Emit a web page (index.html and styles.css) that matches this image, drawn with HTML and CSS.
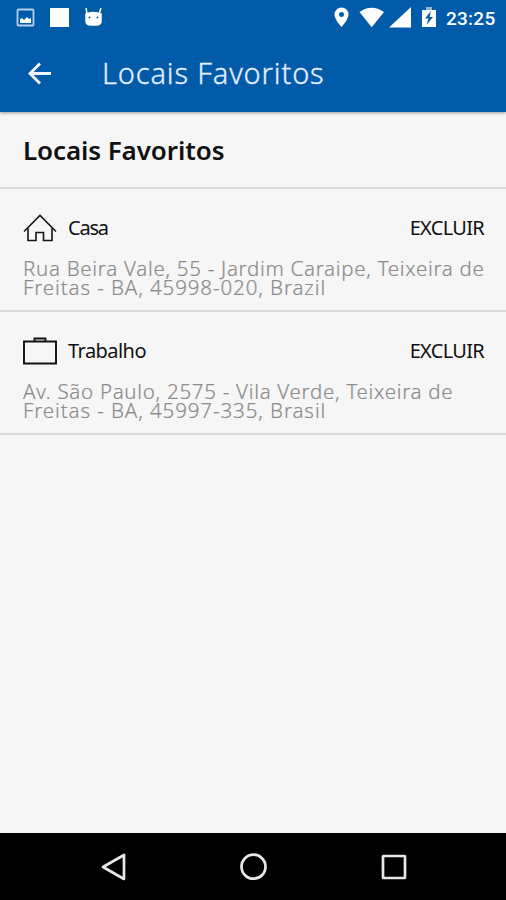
FILE: index.html
```html
<!DOCTYPE html>
<html lang="pt-BR">
<head>
<meta charset="utf-8">
<title>Locais Favoritos</title>
<link rel="stylesheet" href="styles.css">
</head>
<body>
<div class="screen">
  <header class="top">
    <div class="status">
      <svg class="status-left" width="120" height="36" viewBox="0 0 120 36">
        <rect x="17.5" y="9.5" width="16" height="16" rx="1" fill="none" stroke="#b5cfef" stroke-width="1.8"/>
        <path d="M20 23V19l2-1 2 2 3-3 2 2 2-1v5z" fill="#fff"/>
        <path d="M50 8h19v19H50z" fill="#fff"/>
        <path d="M86 14Q93 11 101 14V21Q101 25 96 25H91Q86 25 86 21zM87 14l-1-6M99 14l2-6" fill="#fff" stroke="#fff" stroke-width="1.5"/>
        <circle cx="89.5" cy="17.5" r="1" fill="#025ba9"/><circle cx="97.5" cy="17.5" r="1" fill="#025ba9"/>
      </svg>
      <svg class="status-right" width="110" height="36" viewBox="330 0 110 36">
        <path fill="#fff" fill-rule="evenodd" d="M341.5 7.5a7 7 0 0 0-7 7c0 5 7 12.5 7 12.5s7-7.500 7-12.500a7 7 0 0 0-7-7zm0 4.500a2.500 2.500 0 1 1 0 5 2.500 2.500 0 0 1 0-5z"/>
        <path fill="#fff" d="M359.500 12Q371.500 3.500 384 12L371.700 27.300zM389 27.500L411 7V27.500zM422 10h14v17h-14z"/>
        <path fill="#8db6df" d="M426 7h6v3h-6z"/>
        <path fill="#025ba9" d="M431 11l-6 7.500h3.500L426.500 25l6.500-8h-3.500z"/>
      </svg>
      <span class="clock">23:25</span>
    </div>
    <div class="toolbar">
      <svg class="back" width="24" height="24" viewBox="0 0 24 24" fill="none" stroke="#f4f8ff" stroke-width="2.800"><path d="M25 12.500H4.500M14 2.500L4 12.500l10 10"/></svg>
      <h1>Locais Favoritos</h1>
    </div>
  </header>
  <main>
    <h2>Locais Favoritos</h2>
    <section class="place">
      <div class="row">
        <svg width="34" height="28" viewBox="0 0 34 28" fill="none" stroke="#151515" stroke-width="1.600"><path d="M1 17.500L17 1.500l16 16M5 14v12.500h8V18.500h7.500v8H29V14"/></svg>
        <span class="name casa">Casa</span>
        <span class="delete">EXCLUIR</span>
      </div>
      <p>Rua Beira Vale, 55 - Jardim Caraipe, Teixeira de<br><span class="city">Freitas - BA, 45998-020, Brazil</span></p>
    </section>
    <section class="place">
      <div class="row">
        <svg width="34" height="28" viewBox="0 0 34 28" fill="none" stroke="#111" stroke-width="1.900"><path d="M1 4.500h32v22H1zM11.500 4.500v-3h11v3"/></svg>
        <span class="name">Trabalho</span>
        <span class="delete">EXCLUIR</span>
      </div>
      <p>Av. São Paulo, 2575 - Vila Verde, Teixeira de<br><span class="city">Freitas - BA, 45997-335, Brasil</span></p>
    </section>
  </main>
  <nav>
    <svg width="28" height="28" viewBox="0 0 28 28"><path d="M25 2v24L4 14z"/></svg>
    <svg width="28" height="28" viewBox="0 0 28 28"><circle cx="13.500" cy="13.700" r="12"/></svg>
    <svg width="28" height="28" viewBox="0 0 28 28"><rect x="3" y="3" width="22" height="22" rx=".5"/></svg>
  </nav>
</div>
</body>
</html>
```
FILE: styles.css
```css
* { box-sizing: border-box; }
body { margin: 0; font-family: "Noto Sans", "Open Sans", sans-serif; background: #f6f6f6; }
.screen { width: 506px; height: 900px; display: flex; flex-direction: column; overflow: hidden; }
.top { height: 112px; background: #025ba9; color: #fff; box-shadow: 0 1px 3px rgba(0,0,0,.4); z-index: 1; flex: none; }
.status { height: 36px; display: flex; }
.status-right { margin-left: 210px; }
.clock { margin-left: 6px; font: 500 19px/37px Roboto, sans-serif; letter-spacing: .25px; }
.toolbar { height: 76px; display: flex; align-items: center; padding: 0 0 2px 26px; }
.back { overflow: visible; }
h1, h2, p { margin: 0; white-space: nowrap; }
h1 { margin-left: 52px; font-size: 29px; font-weight: 300; line-height: 40px; letter-spacing: .85px; color: #e4efff; -webkit-text-stroke: .3px #e4efff; }
main { flex: 1; }
h2 { height: 77px; padding: 18px 23px 0; font-size: 26px; line-height: 40px; font-weight: 600; letter-spacing: -.1px; color: #111; border-bottom: 2px solid #dcdcdc; }
.place { height: 123px; padding: 25px 22px 0 23px; border-bottom: 2px solid #dcdcdc; }
.row { display: flex; height: 28px; }
.row svg { flex: none; }
.name { margin-left: 11px; letter-spacing: -.55px; }
.casa { letter-spacing: -1.2px; }
.name, .delete { font-size: 20px; line-height: 28px; color: #111; }
.delete { margin-left: auto; letter-spacing: -.7px; }
p { margin-top: 17px; font-size: 20.5px; line-height: 19px; font-weight: 300; letter-spacing: .71px; color: #8c8c8c; -webkit-text-stroke: .2px #8c8c8c; }
.city { letter-spacing: .9px; }
nav { height: 67px; background: #000; display: flex; justify-content: space-between; padding: 20px 98px 0 99px; }
nav svg { fill: none; stroke: #e8e8e8; stroke-width: 2.700; stroke-linejoin: round; }
```
